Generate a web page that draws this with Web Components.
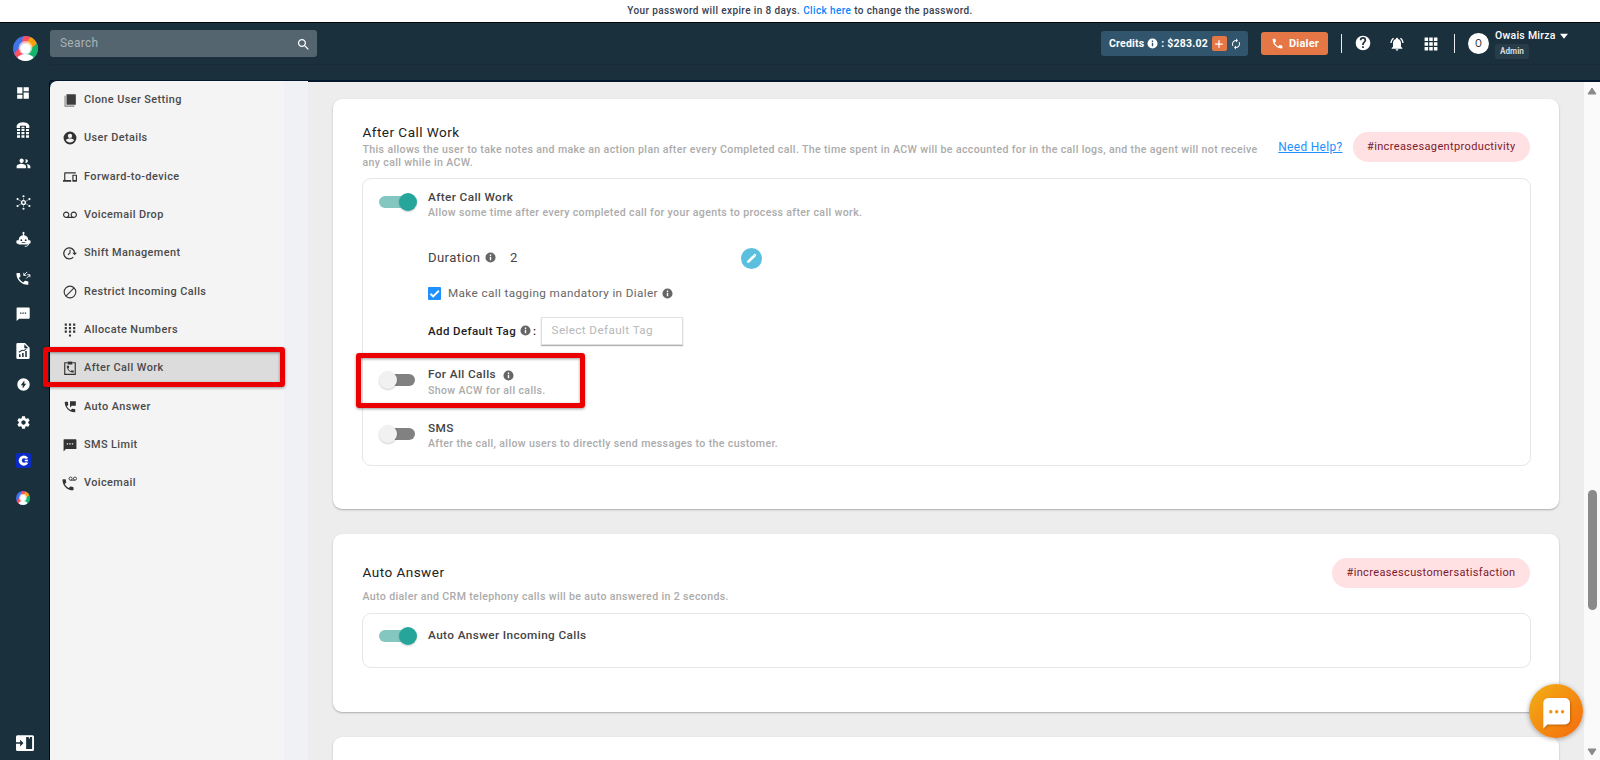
<!DOCTYPE html>
<html lang="en">
<head>
<meta charset="utf-8">
<title>User Settings</title>
<style>
    html, body { margin: 0; height: 100%; overflow: hidden; }
    body {
        font-family: Roboto, "Liberation Sans", sans-serif;
        font-size: 11px;
        letter-spacing: .4px;
        color: #444;
        background: #ededed;
    }
</style>
</head>
<body>
<app-shell>
    <notice-bar slot="notice">Your password will expire in 8 days. <a>Click here</a> to change the password.</notice-bar>
    <side-rail slot="rail"></side-rail>
    <top-bar slot="top"></top-bar>
    <settings-menu slot="menu">
        <menu-item icon="clone">Clone User Setting</menu-item>
        <menu-item icon="account">User Details</menu-item>
        <menu-item icon="devices">Forward-to-device</menu-item>
        <menu-item icon="voicemail">Voicemail Drop</menu-item>
        <menu-item icon="shift">Shift Management</menu-item>
        <menu-item icon="block">Restrict Incoming Calls</menu-item>
        <menu-item icon="dialpad">Allocate Numbers</menu-item>
        <menu-item icon="acw" active>After Call Work</menu-item>
        <menu-item icon="phonemsg">Auto Answer</menu-item>
        <menu-item icon="sms">SMS Limit</menu-item>
        <menu-item icon="phonevm">Voicemail</menu-item>
    </settings-menu>

    <settings-card style="--height: 410px; --pad-top: 24px; --box-height: 288px; --box-gap: 9px">
        <span slot="title">After Call Work</span>
        <span slot="desc">This allows the user to take notes and make an action plan after every Completed call. The time spent in ACW will be accounted for in the call logs, and the agent will not receive any call while in ACW.</span>
        <help-link slot="side">Need Help?</help-link>
        <hash-tag slot="side">#increasesagentproductivity</hash-tag>

        <setting-row on>
            After Call Work
            <span slot="desc">Allow some time after every completed call for your agents to process after call work.</span>
        </setting-row>
        <acw-options></acw-options>
        <setting-row info marked style="margin-top: 22px; --toggle-top: 5px; --desc-height: 17px">
            For All Calls
            <span slot="desc">Show ACW for all calls.</span>
        </setting-row>
        <setting-row style="margin-top: 23px; --toggle-top: 5px; --desc-height: 16px">
            SMS
            <span slot="desc">After the call, allow users to directly send messages to the customer.</span>
        </setting-row>
    </settings-card>

    <settings-card style="--height: 178px; --pad-top: 22px; --title-height: 34px; --desc-height: 15px; --title-pad: 7px; --side-top: 2px; --box-height: 55px; --box-gap: 8px">
        <span slot="title">Auto Answer</span>
        <span slot="desc">Auto dialer and CRM telephony calls will be auto answered in 2 seconds.</span>
        <hash-tag slot="side">#increasescustomersatisfaction</hash-tag>
        <setting-row on style="margin-top: 3px; --toggle-top: 0px">Auto Answer Incoming Calls</setting-row>
    </settings-card>

    <settings-card style="--height: 200px"></settings-card>
</app-shell>

<script>
const PHONE = 'M6.62 10.79c1.44 2.83 3.76 5.14 6.59 6.59l2.2-2.2c.27-.27.67-.36 1.02-.24 1.12.37 2.33.57 3.57.57.55 0 1 .45 1 1V20c0 .55-.45 1-1 1-9.39 0-17-7.61-17-17 0-.55.45-1 1-1h3.5c.55 0 1 .45 1 1 0 1.25.2 2.45.57 3.57.11.35.03.74-.25 1.02l-2.2 2.2z'

const LOGO = `
    <clipPath id="c"><circle cx="12" cy="12" r="12"/></clipPath>
    <g clip-path="url(#c)">
        <rect width="24" height="24" fill="#4173e8"/>
        <path d="M9 3L11 -2H17L15 8 9 10z" fill="#fb4f62"/>
        <path d="M12 8L18 -1 25 4 19 12z" fill="#fb9e0c"/>
        <path d="M14 14L24 7V24H14z" fill="#14b56b"/>
        <path d="M0 18L8 9 10 24H3z" fill="#fb4f62"/>
        <circle cx="12" cy="11.300" r="6.600" fill="#fff" opacity=".6"/>
        <circle cx="12" cy="12" r="5" fill="#fff"/>
        <path d="M3.800 21.500c2-3.200 5.200-4.200 8.200-4.200s6.200 1 8.200 4.200L17 24H7z" fill="#fff"/>
    </g>`

// all glyphs live on a 24x24 grid
const ICONS = {
    logo: LOGO,
    dashboard: '<path d="M2 13h9V2H2v11zm0 9h9v-7H2v7zm11 0h9V11h-9v11zm0-20v7h9V2h-9z"/>',
    deskphone: '<path d="M2.500 9V5.500C4 1.800 8 .5 12 .5s8 1.300 9.500 5V9h-5V5.500h-9V9z"/><path d="M3 10.500h4.500v3H3zm6.700 0h4.500v3H9.700zm6.800 0H21v3h-4.500zM3 15h4.500v3.500H3zm6.700 0h4.500v3.500H9.700zm6.800 0H21v3.500h-4.500zM3 20h4.500v3.500H3zm6.700 0h4.500v3.500H9.700zm6.800 0H21v3.500h-4.500zM9.700 7h4.500v2.200H9.700z"/>',
    people: '<path d="M16 11c1.660 0 2.990-1.340 2.990-3S17.660 5 16 5l-1.200.3c1 1.500 1 3.900 0 5.400L16 11zM9 11c1.900 0 3.400-1.500 3.400-3.500S10.900 4 9 4 5.600 5.500 5.600 7.500 7.100 11 9 11zm-.5 1.500C5.600 12.500 1 14 1 16.800V19.500h15v-2.700c0-2.800-4.600-4.300-7.500-4.300zm8 .1c1 .9 2 2.300 2 4.200v2.700H23v-2.700c0-2.500-3.500-4-6.500-4.200z"/>',
    hub: '<circle cx="12" cy="12" r="3" fill="none" stroke="currentColor" stroke-width="2.200"/><path d="M12 5v4M12 15v4M4 7.500l5 3M15 13.500l5 3M20 7.500l-5 3M9 13.500l-5 3" fill="none" stroke="currentColor" stroke-width=".8"/><circle cx="12" cy="2" r="1.700"/><circle cx="12" cy="22" r="1.700"/><circle cx="2.500" cy="6.500" r="1.700"/><circle cx="21.500" cy="6.500" r="1.700"/><circle cx="2.500" cy="17.500" r="1.700"/><circle cx="21.500" cy="17.500" r="1.700"/>',
    robot: '<path fill-rule="evenodd" d="M11 5V3a1.700 1.700 0 1 1 2 0v2c4 .3 6.500 3.500 6.800 8H22a1.300 1.300 0 0 1 1.300 1.300v3A1.300 1.300 0 0 1 22 18.600h-2V20H4v-1.400H2a1.300 1.300 0 0 1-1.300-1.300v-3A1.300 1.300 0 0 1 2 13h2.200C4.500 8.500 7 5.300 11 5zM8.500 11.500a1.500 1.500 0 1 0 0 3 1.500 1.500 0 0 0 0-3zm7 0a1.500 1.500 0 1 0 0 3 1.500 1.500 0 0 0 0-3zM9 17.500h6v-1.100H9z"/><path d="M20 19c0 2.500-2 4-6 4" fill="none" stroke="currentColor" stroke-width="1.500"/>',
    callswap: `<g transform="translate(-2.500 1.500) scale(1.060)"><path d="${PHONE}"/></g><path d="M18 3l-5.500 5.500M12.500 4.500v4h4M16.500 13.500L22 8M18 7.500h4.200v4" fill="none" stroke="currentColor" stroke-width="1.500"/>`,
    chat: '<path fill-rule="evenodd" d="M2 1h20a1.500 1.500 0 0 1 1.500 1.500v16A1.500 1.500 0 0 1 22 20H5.500L1 24V2.500A1.500 1.500 0 0 1 2 1zm5 8.500v2.200h2.300V9.500zm4 0v2.200h2.300V9.500zm4 0v2.200h2.300V9.500z"/>',
    report: '<path fill-rule="evenodd" d="M4 0h11l7 7v15a2 2 0 0 1-2 2H4a2 2 0 0 1-2-2V2a2 2 0 0 1 2-2zm10 2v6h6zM6 17v4h2.300v-4zm4.700-2v6H13v-6zm4.700-3v9h2.300v-9zM6 14.500l5-3 3 .5 3.500-3-.8-.8-3.200 2.400-3-.6-5 3.200z"/>',
    bolt: '<path fill-rule="evenodd" d="M12 .5a11.500 11.500 0 1 0 0 23 11.500 11.500 0 0 0 0-23zM13.500 4.500v6H17l-6.500 9v-6.300H7z"/>',
    gear: '<path d="M19.430 12.980c.04-.32.07-.64.07-.98s-.03-.66-.07-.98l2.110-1.650c.19-.15.24-.42.12-.64l-2-3.460c-.12-.22-.39-.3-.61-.22l-2.490 1c-.52-.4-1.080-.73-1.690-.98l-.38-2.650C14.460 2.180 14.250 2 14 2h-4c-.25 0-.46.18-.49.42l-.38 2.650c-.61.25-1.170.59-1.690.98l-2.490-1c-.23-.09-.49 0-.61.22l-2 3.460c-.13.22-.07.49.12.64l2.110 1.650c-.04.32-.07.65-.07.98s.03.66.07.98l-2.110 1.650c-.19.15-.24.42-.12.64l2 3.460c.12.22.39.3.61.22l2.490-1c.52.4 1.080.73 1.690.98l.38 2.650c.03.24.24.42.49.42h4c.25 0 .46-.18.49-.42l.38-2.650c.61-.25 1.170-.59 1.690-.98l2.490 1c.23.09.49 0 .61-.22l2-3.460c.12-.22.07-.49-.12-.64l-2.110-1.650zM12 15.500c-1.930 0-3.500-1.570-3.500-3.500s1.570-3.500 3.500-3.500 3.500 1.570 3.500 3.500-1.570 3.500-3.500 3.500z"/>',
    cbadge: '<rect width="24" height="24" rx="3" fill="#0a2bc4"/><circle cx="12.500" cy="12" r="8.200" fill="#fff"/><circle cx="13" cy="12" r="3.700" fill="#0a2bc4"/><path d="M13 12l5-3.500h4v7h-4z" fill="#0a2bc4"/><path d="M14 10.700h5v2.600h-5z" fill="#fff"/>',
    expand: '<path fill-rule="evenodd" d="M2 1.500h20a2 2 0 0 1 2 2v17a2 2 0 0 1-2 2H2a2 2 0 0 1-2-2V13h5.500v3.500L10 12 5.500 7.500V11H0V3.500a2 2 0 0 1 2-2zM13.500 4v16h8V4z"/><path d="M17 4h1.500v2H17z"/>',
    search: '<path d="M15.500 14h-.79l-.28-.27C15.410 12.590 16 11.110 16 9.500 16 5.910 13.090 3 9.500 3S3 5.910 3 9.500 5.910 16 9.500 16c1.610 0 3.090-.59 4.230-1.570l.27.28v.79l5 4.990L20.490 19l-4.990-5zm-6 0C7.010 14 5 11.990 5 9.500S7.010 5 9.500 5 14 7.010 14 9.500 11.990 14 9.500 14z"/>',
    info: '<path fill-rule="evenodd" d="M12 1a11 11 0 1 0 0 22 11 11 0 0 0 0-22zm1.500 17h-3v-7.500h3V18zm0-9.500h-3v-3h3v3z"/>',
    plus: '<path d="M12 3v18M3 12h18" fill="none" stroke="currentColor" stroke-width="3"/>',
    refresh: '<path d="M12 6v3l4-4-4-4v3c-4.420 0-8 3.580-8 8 0 1.570.46 3.030 1.240 4.260L6.700 14.800c-.45-.83-.7-1.790-.7-2.800 0-3.310 2.690-6 6-6zm6.760 1.740L17.300 9.200c.44.84.7 1.790.7 2.800 0 3.310-2.690 6-6 6v-3l-4 4 4 4v-3c4.420 0 8-3.580 8-8 0-1.570-.46-3.030-1.240-4.260z"/>',
    phone: `<path d="${PHONE}"/>`,
    help: '<path fill-rule="evenodd" d="M12 1a11 11 0 1 0 0 22 11 11 0 0 0 0-22zm1.300 18.500h-2.600v-2.600h2.600zm2.500-9.200l-1.100 1.200c-.9.900-1.400 1.700-1.400 3.500h-2.600v-.6c0-1.300.5-2.400 1.400-3.400l1.400-1.500c.4-.4.700-.9.700-1.600a2.200 2.200 0 0 0-4.400 0H7.200a4.800 4.800 0 0 1 9.600 0c0 .9-.4 1.800-1 2.400z"/>',
    bell: '<path d="M7.580 4.080L6.150 2.650C3.750 4.480 2.170 7.300 2.030 10.500h2c.15-2.650 1.510-4.970 3.550-6.420zM19.970 10.500h2c-.15-3.200-1.730-6.020-4.120-7.850l-1.420 1.430c2.020 1.450 3.390 3.770 3.540 6.420zM18 11c0-3.070-1.640-5.640-4.500-6.320V4c0-.83-.67-1.500-1.500-1.500s-1.500.67-1.500 1.500v.68C7.630 5.360 6 7.920 6 11v5l-2 2v1h16v-1l-2-2v-5zm-6 11c1.100 0 2-.9 2-2h-4c0 1.100.9 2 2 2z"/>',
    apps: '<path d="M1 1h6v6H1zm8 0h6v6H9zm8 0h6v6h-6zM1 9h6v6H1zm8 0h6v6H9zm8 0h6v6h-6zM1 17h6v6H1zm8 0h6v6H9zm8 0h6v6h-6z"/>',
    caret: '<path d="M0 5h24L12 20z"/>',
    edit: '<path d="M4 16.500V20h3.500L17 10.500 13.500 7zM19.500 8l1-1c.5-.5.5-1.300 0-1.800l-1.700-1.700c-.5-.5-1.300-.5-1.800 0l-1 1z"/><path d="M13 8l3-3 3.500 3.500-3 3z"/>',
    check: '<path d="M4.500 12.500l5 5L20 7" fill="none" stroke="currentColor" stroke-width="3.500"/>',
    clone: '<path d="M6 2h15a1 1 0 0 1 1 1v17H6z" opacity=".95"/><path d="M3.500 4.500v18h16" fill="none" stroke="currentColor" stroke-width="1.800" opacity=".6"/>',
    account: '<path fill-rule="evenodd" d="M12 1a11 11 0 1 0 0 22 11 11 0 0 0 0-22zm0 3.800a3.700 3.700 0 1 1 0 7.400 3.700 3.700 0 0 1 0-7.400zm0 15c-2.900 0-5.500-1.500-7-3.800.1-2.300 4.600-3.200 7-3.200s6.900.9 7 3.200a8.400 8.400 0 0 1-7 3.800z"/>',
    devices: '<path d="M4 6h18V4H4c-1.100 0-2 .9-2 2v11H0v3h14v-3H4V6zm19 2h-6c-.55 0-1 .45-1 1v10c0 .55.45 1 1 1h6c.55 0 1-.45 1-1V9c0-.55-.45-1-1-1zm-1 9h-4v-7h4v7z"/>',
    voicemail: '<path d="M18.500 6C15.460 6 13 8.460 13 11.500c0 1.330.47 2.550 1.260 3.500H9.740c.79-.95 1.260-2.170 1.260-3.500C11 8.460 8.540 6 5.500 6S0 8.460 0 11.500 2.460 17 5.500 17h13c3.040 0 5.500-2.460 5.500-5.500S21.540 6 18.500 6zm-13 9C3.570 15 2 13.430 2 11.500S3.570 8 5.500 8 9 9.570 9 11.500 7.430 15 5.500 15zm13 0c-1.930 0-3.500-1.570-3.500-3.500S16.570 8 18.500 8 22 9.570 22 11.500 20.430 15 18.500 15z"/>',
    shift: '<path d="M17.500 19A9.300 9.300 0 1 1 20 12" fill="none" stroke="currentColor" stroke-width="2.200"/><path d="M16 11.500h8l-4 4.500z"/><path d="M12 6.500V12l-3.500 3" fill="none" stroke="currentColor" stroke-width="1.800"/>',
    block: '<circle cx="12" cy="12" r="10" fill="none" stroke="currentColor" stroke-width="1.900"/><path d="M5 19L19 5" fill="none" stroke="currentColor" stroke-width="1.900"/>',
    dialpad: '<path d="M3 1h3.600v3.600H3zm7.200 0h3.600v3.600h-3.600zm7.200 0H21v3.600h-3.600zM3 7h3.600v3.600H3zm7.200 0h3.600v3.600h-3.600zm7.200 0H21v3.600h-3.600zM3 13h3.600v3.600H3zm7.200 0h3.600v3.600h-3.600zm7.200 0H21v3.600h-3.600zm-7.200 6.500h3.600v3.600h-3.600z"/>',
    acw: `<path d="M8 3H3v20h18V3h-5" fill="none" stroke="currentColor" stroke-width="2"/><path d="M8 1h8v5H8z"/><g transform="translate(4.500 6) scale(.66)"><path d="${PHONE}"/></g>`,
    phonemsg: `<path d="${PHONE}"/><path d="M12 2h10v8h-7l-3 3z"/>`,
    sms: '<path fill-rule="evenodd" d="M2 2h20a1 1 0 0 1 1 1v15a1 1 0 0 1-1 1H5l-4 4V3a1 1 0 0 1 1-1zm4.500 7v2.200h2.300V9zm4.300 0v2.200h2.300V9zm4.300 0v2.200h2.300V9z"/>',
    phonevm: `<g transform="translate(-4 2.500) scale(1.050)"><path d="${PHONE}"/></g><circle cx="13" cy="4.500" r="2.700" fill="none" stroke="currentColor" stroke-width="1.500"/><circle cx="20.500" cy="4.500" r="2.700" fill="none" stroke="currentColor" stroke-width="1.500"/><path d="M13 7.200h7.500" stroke="currentColor" stroke-width="1.500"/>`
}

class UiIcon extends HTMLElement {
    constructor() {
        super()
        const size = this.getAttribute('size') || 14
        this.attachShadow({mode: 'open'}).innerHTML = `
        <style>
            :host { display: inline-block; flex: none; line-height: 0; width: ${size}px; height: ${size}px; }
            svg { display: block; width: 100%; height: 100%; fill: currentColor; overflow: visible; }
        </style>
        <svg viewBox="0 0 24 24">${ICONS[this.getAttribute('name')] || ''}</svg>
        `
    }
}
customElements.define('ui-icon', UiIcon)

class AppShell extends HTMLElement {
    constructor() {
        super()
        this.attachShadow({mode: 'open'}).innerHTML = `
        <style>
            :host {
                display: grid;
                grid-template: 23px 59px 1fr / 50px 258px 1fr;
                width: 1600px;
                height: 760px;
                overflow: hidden;
                background: #1b303d;
            }
            .notice { grid-area: 1 / 1 / 2 / 4; }
            .rail { grid-area: 2 / 1 / 4 / 2; }
            .top { grid-area: 2 / 2 / 3 / 4; }
            .menu { grid-area: 3 / 2 / 4 / 3; margin-top: -1px; }
            .content {
                grid-area: 3 / 3 / 4 / 4;
                display: flex;
                min-height: 0;
                background: #ededed;
            }
            .cards {
                flex: 1;
                display: flex;
                flex-direction: column;
                gap: 25px;
                padding: 17px 25px 0;
                overflow: hidden;
            }
            .cards ::slotted(*) { flex: none; }
        </style>
        <div class="notice"><slot name="notice"></slot></div>
        <div class="rail"><slot name="rail"></slot></div>
        <div class="top"><slot name="top"></slot></div>
        <div class="menu"><slot name="menu"></slot></div>
        <div class="content">
            <div class="cards"><slot></slot></div>
            <scroll-track></scroll-track>
        </div>
        <chat-button></chat-button>
        `
    }
}
customElements.define('app-shell', AppShell)

class NoticeBar extends HTMLElement {
    constructor() {
        super()
        this.attachShadow({mode: 'open'}).innerHTML = `
        <style>
            :host {
                display: block;
                box-sizing: border-box;
                height: 23px;
                border-bottom: 1px solid #05080a;
                background: #fff;
                color: #364052;
                font-size: 10px;
                font-weight: 500;
                letter-spacing: .39px;
                line-height: 21px;
                text-align: center;
            }
            ::slotted(a) { color: #0a84ff; }
        </style>
        <slot></slot>
        `
    }
}
customElements.define('notice-bar', NoticeBar)

class SideRail extends HTMLElement {
    constructor() {
        super()
        // [icon, size, space above]
        const items = [
            ['dashboard', 14, 10.5], ['deskphone', 16, 21], ['people', 15, 17.5], ['hub', 15, 22.5],
            ['robot', 15, 21], ['callswap', 15, 22], ['chat', 14, 20.5], ['report', 16, 21.5],
            ['bolt', 13, 17.5], ['gear', 15, 22], ['cbadge', 15, 21.5], ['logo', 14, 22]
        ]
        this.attachShadow({mode: 'open'}).innerHTML = `
        <style>
            :host {
                display: flex;
                flex-direction: column;
                box-sizing: border-box;
                height: 737px;
                color: #fff;
                background: linear-gradient(#05080a, #05080a) 49px 59px / 1px 100% no-repeat #1b303d;
            }
            .brand { padding: 13px 0 0 12.5px; height: 38.500px; }
            .item { display: flex; align-items: center; justify-content: center; width: 46px; height: 16px; }
            .toggle { margin: auto 0 8px 16px; height: 18px; padding-top: 3px; }
            .toggle ui-icon { vertical-align: top; }
        </style>
        <div class="brand"><ui-icon name="logo" size="25"></ui-icon></div>
        ${items.map(([name, size, gap]) => `<div class="item" style="margin-top: ${gap}px"><ui-icon name="${name}" size="${size}"></ui-icon></div>`).join('')}
        <div class="toggle"><ui-icon name="expand" size="18"></ui-icon></div>
        `
    }
}
customElements.define('side-rail', SideRail)

class TopBar extends HTMLElement {
    constructor() {
        super()
        this.attachShadow({mode: 'open'}).innerHTML = `
        <style>
            :host {
                display: flex;
                align-items: flex-start;
                box-sizing: border-box;
                height: 59px;
                border-bottom: 2px solid #04182d;
                background: linear-gradient(#172a36, #172a36) 0 41px / 100% 1px no-repeat #1b303d;
                color: #fff;
                font-weight: 500;
            }
            .search {
                display: flex;
                align-items: center;
                justify-content: space-between;
                box-sizing: border-box;
                width: 267px;
                height: 27px;
                margin-top: 7px;
                padding: 0 6px 0 10px;
                border-radius: 3px;
                background: #54656f;
                color: #a9b2b7;
                font-size: 11.900px;
                font-weight: 400;
                letter-spacing: .3px;
                line-height: 25px;
            }
            .search span { margin-top: -1px; }
            .search ui-icon { color: #fff; margin-top: 2px; }
            .right { display: flex; align-items: center; height: 41px; margin-left: auto; }
            .credits {
                display: flex;
                align-items: center;
                box-sizing: border-box;
                width: 147px;
                height: 25px;
                margin-right: 13px;
                padding-left: 8px;
                border-radius: 3px;
                background: #30556c;
                font-size: 10.500px;
                font-weight: 700;
                letter-spacing: .2px;
            }
            .plus {
                display: flex;
                align-items: center;
                justify-content: center;
                width: 15px;
                height: 15px;
                margin: 0 3px 0 4px;
                border-radius: 2px;
                background: #e57645;
            }
            .dialer {
                display: flex;
                align-items: center;
                box-sizing: border-box;
                width: 67px;
                height: 23px;
                padding-left: 10px;
                gap: 5px;
                border-radius: 3px;
                background: #e57645;
                font-size: 11px;
                font-weight: 700;
                letter-spacing: .2px;
            }
            .bar { width: 1px; height: 19px; background: #e8ebed; }
            .avatar {
                display: flex;
                align-items: center;
                justify-content: center;
                width: 21px;
                height: 21px;
                margin: 0 6px 0 13px;
                border-radius: 50%;
                background: #fff;
                color: #333;
                font-size: 10px;
                font-weight: 400;
                letter-spacing: 0;
            }
            .user { width: 105px; margin-top: -1px; }
            .name { display: flex; align-items: center; gap: 4px; font-size: 10.500px; letter-spacing: .25px; line-height: 16px; }
            .role {
                display: inline-block;
                padding: 0 5px;
                border-radius: 3px;
                background: #293d49;
                color: #d3d8db;
                font-size: 8.200px;
                font-weight: 700;
                letter-spacing: 0;
                line-height: 15px;
                vertical-align: top;
            }
        </style>
        <div class="search"><span>Search</span><ui-icon name="search" size="15"></ui-icon></div>
        <div class="right">
            <div class="credits">
                <span>Credits</span>
                <ui-icon name="info" size="11" style="margin: 0 3px 0 3px"></ui-icon>
                <span>: $283.02</span>
                <div class="plus"><ui-icon name="plus" size="10"></ui-icon></div>
                <ui-icon name="refresh" size="12"></ui-icon>
            </div>
            <div class="dialer"><ui-icon name="phone" size="13"></ui-icon><span>Dialer</span></div>
            <div class="bar" style="margin: 0 13px"></div>
            <ui-icon name="help" size="16" style="margin: -2px 0 0 -.500px"></ui-icon>
            <ui-icon name="bell" size="16" style="margin: 0 19px 0 18.500px"></ui-icon>
            <ui-icon name="apps" size="14"></ui-icon>
            <div class="bar" style="margin-left: 16px"></div>
            <div class="avatar">O</div>
            <div class="user">
                <div class="name">Owais Mirza <ui-icon name="caret" size="8"></ui-icon></div>
                <span class="role">Admin</span>
            </div>
        </div>
        `
    }
}
customElements.define('top-bar', TopBar)

class SettingsMenu extends HTMLElement {
    constructor() {
        super()
        this.attachShadow({mode: 'open'}).innerHTML = `
        <style>
            :host {
                display: block;
                box-sizing: border-box;
                width: 258px;
                height: 679px;
                border-radius: 7px 0 0 0;
                background: linear-gradient(90deg, #f4f4f4 234px, #eff1f5 234px);
            }
        </style>
        <slot></slot>
        `
    }
}
customElements.define('settings-menu', SettingsMenu)

class MenuItem extends HTMLElement {
    constructor() {
        super()
        this.attachShadow({mode: 'open'}).innerHTML = `
        <style>
            :host { display: block; height: 38.330px; color: #4a4a4a; }
            .item {
                display: flex;
                align-items: center;
                position: relative;
                box-sizing: border-box;
                width: 230px;
                height: 38.330px;
                padding: 0 0 1px 13px;
                font-size: 10.900px;
                font-weight: 500;
                letter-spacing: .41px;
            }
            ui-icon { margin: 1px 7px 0 0; color: #333; }
            :host([active]) .item { background: linear-gradient(#dcdcdc, #dcdcdc) 0 3px / 100% 31px no-repeat; }
            .mark { display: none; }
            :host([active]) .mark {
                display: block;
                position: absolute;
                left: -7px;
                top: -2.500px;
                width: 232px;
                height: 30px;
                border: 5px solid #ea0000;
                border-radius: 3px;
                box-shadow: 0 1px 3px rgba(0, 0, 0, .4), inset 0 1px 3px rgba(0, 0, 0, .4);
            }
        </style>
        <div class="item">
            <ui-icon name="${this.getAttribute('icon')}" size="14"></ui-icon><slot></slot>
            <div class="mark"></div>
        </div>
        `
    }
}
customElements.define('menu-item', MenuItem)

class SettingsCard extends HTMLElement {
    constructor() {
        super()
        this.attachShadow({mode: 'open'}).innerHTML = `
        <style>
            :host {
                display: block;
                box-sizing: border-box;
                height: var(--height);
                padding: var(--pad-top, 24px) 28px 0 29.500px;
                border-radius: 9px;
                background: #fff;
                box-shadow: 0 1px 2px rgba(0, 0, 0, .28);
            }
            .head { display: flex; justify-content: space-between; }
            .text { width: 905px; }
            .title {
                box-sizing: border-box;
                height: var(--title-height, 19.800px);
                padding-top: var(--title-pad, 0);
                color: #222;
                font-size: 13.560px;
                letter-spacing: .46px;
                line-height: 19.800px;
            }
            .desc {
                height: var(--desc-height, 26.600px);
                color: #ababab;
                font-size: 10.600px;
                font-weight: 500;
                letter-spacing: .35px;
                line-height: 13.300px;
            }
            .side { display: flex; gap: 10px; padding: var(--side-top, 9px) 1px 0 0; height: 30px; align-items: center; }
            .box {
                box-sizing: border-box;
                height: var(--box-height);
                margin: var(--box-gap) 0 0 -.500px;
                padding: 10px 16px 10px 15px;
                border: 1px solid #e6e6e6;
                border-radius: 9px;
            }
            :host(:empty) .head, :host(:empty) .box { display: none; }
        </style>
        <div class="head">
            <div class="text">
                <div class="title"><slot name="title"></slot></div>
                <div class="desc"><slot name="desc"></slot></div>
            </div>
            <div class="side"><slot name="side"></slot></div>
        </div>
        <div class="box"><slot></slot></div>
        `
    }
}
customElements.define('settings-card', SettingsCard)

class HelpLink extends HTMLElement {
    constructor() {
        super()
        this.attachShadow({mode: 'open'}).innerHTML = `
        <style>
            :host { color: #1e90ff; font-size: 11.900px; letter-spacing: .35px; text-decoration: underline; white-space: nowrap; }
        </style>
        <slot></slot>
        `
    }
}
customElements.define('help-link', HelpLink)

class HashTag extends HTMLElement {
    constructor() {
        super()
        this.attachShadow({mode: 'open'}).innerHTML = `
        <style>
            :host {
                display: block;
                padding: 0 14.500px;
                border-radius: 15px;
                background: #ffe0e3;
                color: #7b1b2b;
                font-size: 11px;
                letter-spacing: .36px;
                line-height: 30px;
                white-space: nowrap;
            }
        </style>
        <slot></slot>
        `
    }
}
customElements.define('hash-tag', HashTag)

class ToggleSwitch extends HTMLElement {
    constructor() {
        super()
        this.attachShadow({mode: 'open'}).innerHTML = `
        <style>
            :host { display: block; flex: none; width: 38px; height: 18px; }
            .track {
                display: flex;
                align-items: center;
                width: 34px;
                height: 12px;
                margin: 3px 0 0 2px;
                border-radius: 6px;
                background: #818181;
            }
            .knob {
                flex: none;
                width: 18px;
                height: 18px;
                margin-left: -2px;
                border-radius: 50%;
                background: #f1f1f1;
                box-shadow: 0 1px 2px rgba(0, 0, 0, .2);
            }
            :host([on]) .track { justify-content: flex-end; width: 36px; margin-left: 0; background: #84c7c1; }
            :host([on]) .knob { background: #26a69a; margin-right: -2px; }
        </style>
        <div class="track"><div class="knob"></div></div>
        `
    }
}
customElements.define('toggle-switch', ToggleSwitch)

class SettingRow extends HTMLElement {
    constructor() {
        super()
        this.attachShadow({mode: 'open'}).innerHTML = `
        <style>
            :host { display: flex; position: relative; height: 31px; }
            toggle-switch { margin: var(--toggle-top, 4px) 11.500px 0 .500px; }
            .label { display: flex; align-items: center; height: 16px; color: #444; font-size: 11.800px; font-weight: 500; letter-spacing: .38px; }
            .label ui-icon { margin: 3px 0 0 7px; color: #666; }
            .desc { color: #ababab; font-size: 10.600px; font-weight: 500; letter-spacing: .35px; line-height: var(--desc-height, 15px); }
            .mark { display: none; }
            :host([marked]) .mark {
                display: block;
                position: absolute;
                left: -22px;
                top: -13px;
                width: 219px;
                height: 45px;
                border: 5px solid #ea0000;
                border-radius: 3px;
                box-shadow: 0 1px 3px rgba(0, 0, 0, .4), inset 0 1px 3px rgba(0, 0, 0, .4);
            }
        </style>
        <toggle-switch ${this.hasAttribute('on') ? 'on' : ''}></toggle-switch>
        <div>
            <div class="label"><slot></slot>${this.hasAttribute('info') ? '<ui-icon name="info" size="11"></ui-icon>' : ''}</div>
            <div class="desc"><slot name="desc"></slot></div>
        </div>
        <div class="mark"></div>
        `
    }
}
customElements.define('setting-row', SettingRow)

class AcwOptions extends HTMLElement {
    constructor() {
        super()
        this.attachShadow({mode: 'open'}).innerHTML = `
        <style>
            :host { display: block; padding-left: 50px; color: #444; }
            .row { display: flex; align-items: center; }
            .info { color: #666; margin-left: 4px; }
            .duration { height: 22px; margin-top: 26px; font-size: 13.100px; }
            .duration .name { width: 82px; display: flex; align-items: center; }
            .duration .info { margin: 1px 0 0 4.500px; }
            .duration .value { width: 231px; }
            .edit {
                display: flex;
                align-items: center;
                justify-content: center;
                width: 21px;
                height: 21px;
                margin-top: 3px;
                border-radius: 50%;
                background: #5bc0de;
                color: #fff;
            }
            .tagging { height: 20px; margin-top: 15px; color: #666; font-size: 11.700px; letter-spacing: .39px; }
            .box { width: 13px; height: 13px; margin-right: 7px; border-radius: 1px; background: #1e90ff; color: #fff; }
            .tag { height: 27px; margin-top: 14px; color: #222; font-size: 11.500px; font-weight: 500; }
            .input {
                box-sizing: border-box;
                width: 142px;
                height: 28px;
                margin-left: 4px;
                padding-left: 10px;
                border: 1px solid #e0e0e0;
                box-shadow: 0 1px 1px rgba(0, 0, 0, .3);
                color: #b8b8b8;
                font-size: 11.700px;
                font-weight: 400;
                line-height: 25px;
            }
        </style>
        <div class="row duration">
            <div class="name">Duration <ui-icon class="info" name="info" size="11"></ui-icon></div>
            <div class="value">2</div>
            <div class="edit"><ui-icon name="edit" size="13"></ui-icon></div>
        </div>
        <div class="row tagging">
            <div class="box"><ui-icon name="check" size="13"></ui-icon></div>
            <span>Make call tagging mandatory in Dialer</span>
            <ui-icon class="info" name="info" size="11"></ui-icon>
        </div>
        <div class="row tag">
            <span>Add Default Tag</span>
            <ui-icon class="info" name="info" size="11"></ui-icon>
            <span style="margin-left: 2px">:</span>
            <div class="input">Select Default Tag</div>
        </div>
        `
    }
}
customElements.define('acw-options', AcwOptions)

class ScrollTrack extends HTMLElement {
    constructor() {
        super()
        this.attachShadow({mode: 'open'}).innerHTML = `
        <style>
            :host {
                display: flex;
                flex-direction: column;
                align-items: center;
                box-sizing: border-box;
                width: 16px;
                padding: 5px 0 4px;
                background: #fafafa;
            }
            svg { display: block; width: 10px; height: 8px; fill: #8a8a8a; stroke: #8a8a8a; stroke-linejoin: round; }
            .thumb { width: 9px; height: 120px; margin-top: 395px; border-radius: 5px; background: #8a8a8a; }
            svg:last-child { margin-top: auto; }
        </style>
        <svg viewBox="0 0 10 8"><path d="M1 7L5 1 9 7z"/></svg>
        <div class="thumb"></div>
        <svg viewBox="0 0 10 8"><path d="M1 1L5 7 9 1z"/></svg>
        `
    }
}
customElements.define('scroll-track', ScrollTrack)

class ChatButton extends HTMLElement {
    constructor() {
        super()
        this.attachShadow({mode: 'open'}).innerHTML = `
        <style>
            :host {
                display: flex;
                align-items: center;
                justify-content: center;
                position: absolute;
                left: 1529px;
                top: 684px;
                width: 54px;
                height: 54px;
                border-radius: 50%;
                background: linear-gradient(135deg, #f2b016, #f56a0c);
                box-shadow: 0 1px 5px rgba(0, 0, 0, .35);
            }
            svg { width: 27px; height: 31px; margin-top: 4px; filter: drop-shadow(1px 1px 1px rgba(120, 50, 0, .4)); }
        </style>
        <svg viewBox="0 0 27 31">
            <path d="M5 0h17a5 5 0 0 1 5 5v16.500a5 5 0 0 1-5 5H4.500L.3 30.500V5A5 5 0 0 1 5 0z" fill="#fff"/>
            <g fill="#f3920f"><circle cx="7.800" cy="13.700" r="1.700"/><circle cx="13.700" cy="13.700" r="1.700"/><circle cx="19.600" cy="13.700" r="1.700"/></g>
        </svg>
        `
    }
}
customElements.define('chat-button', ChatButton)
</script>
</body>
</html>
